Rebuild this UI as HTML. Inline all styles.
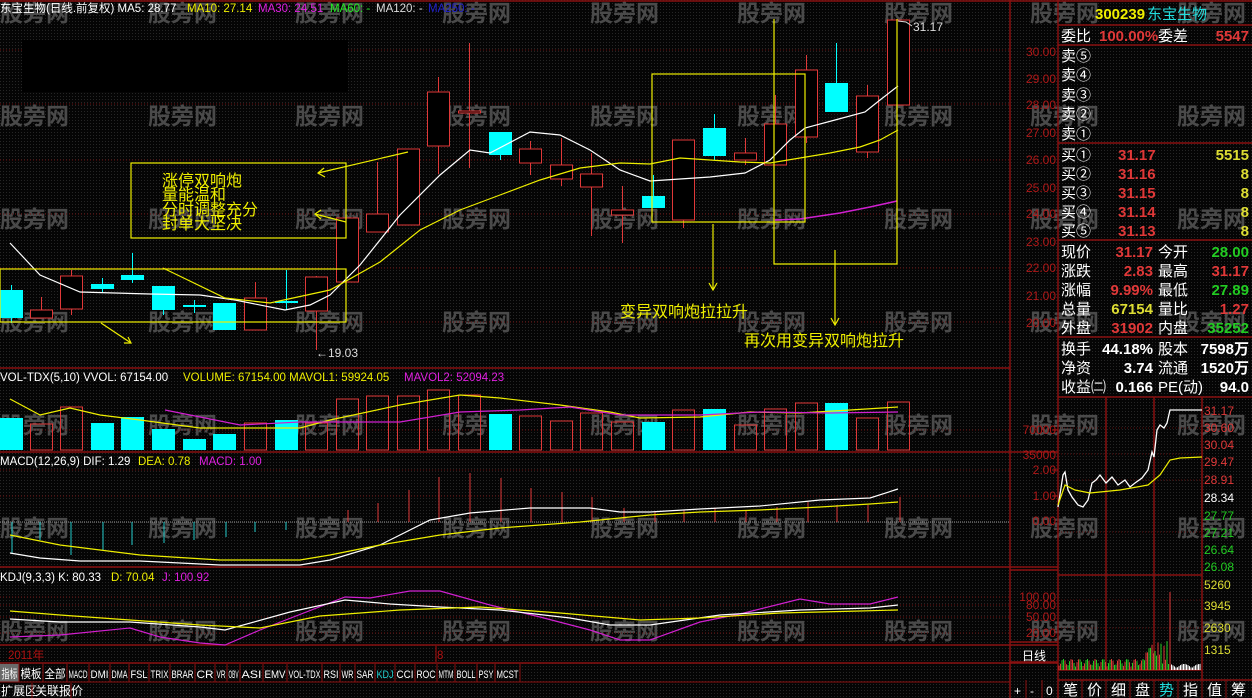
<!DOCTYPE html>
<html><head><meta charset="utf-8"><style>
html,body{margin:0;padding:0;background:#000;width:1252px;height:698px;overflow:hidden}
svg{display:block}
text{font-family:"Liberation Sans","Noto Sans CJK SC",sans-serif}
</style></head><body>
<svg id="s" width="1252" height="698" viewBox="0 0 1252 698" xmlns="http://www.w3.org/2000/svg">
<defs><pattern id="dots" width="3" height="3" patternUnits="userSpaceOnUse"><rect width="3" height="3" fill="#050505"/><rect width="1" height="1" fill="#262626"/></pattern></defs>
<rect width="1252" height="698" fill="url(#dots)"/>
<g id="wm" fill="#4a4a4a" font-size="23" font-weight="bold"></g>
<g stroke="#6a1010" stroke-dasharray="1,2" stroke-width="1">
<line x1="0" y1="50" x2="1010" y2="50"/><line x1="0" y1="104" x2="1010" y2="104"/><line x1="0" y1="160" x2="1010" y2="160"/><line x1="0" y1="214" x2="1010" y2="214"/><line x1="0" y1="268" x2="1010" y2="268"/><line x1="0" y1="322" x2="1010" y2="322"/>
<line x1="0" y1="430" x2="1010" y2="430"/>
<line x1="0" y1="470" x2="1010" y2="470"/><line x1="0" y1="496" x2="1010" y2="496"/>
<line x1="0" y1="597" x2="1010" y2="597"/><line x1="0" y1="605" x2="1010" y2="605"/><line x1="0" y1="617" x2="1010" y2="617"/><line x1="0" y1="633" x2="1010" y2="633"/>
</g>
<line x1="0" y1="522" x2="1010" y2="522" stroke="#999" stroke-dasharray="1,1"/>
<g stroke="#8a1010" stroke-width="1.5" fill="none">
<line x1="0" y1="1" x2="1252" y2="1"/>
<line x1="0" y1="368" x2="1010" y2="368"/><line x1="0" y1="452" x2="1058" y2="452"/><line x1="0" y1="567" x2="1058" y2="567"/><line x1="0" y1="645" x2="1058" y2="645"/><line x1="0" y1="663" x2="1058" y2="663"/>
<line x1="1010" y1="0" x2="1010" y2="698"/><line x1="1058" y1="0" x2="1058" y2="698"/>
<line x1="1058" y1="25" x2="1252" y2="25"/><line x1="1058" y1="45" x2="1252" y2="45"/><line x1="1058" y1="143" x2="1252" y2="143"/><line x1="1058" y1="240" x2="1252" y2="240"/><line x1="1058" y1="337" x2="1252" y2="337"/><line x1="1058" y1="397" x2="1252" y2="397"/>
<line x1="1202" y1="397" x2="1202" y2="680"/><line x1="1058" y1="575" x2="1202" y2="575"/><line x1="1058" y1="670" x2="1202" y2="670"/>
<line x1="1106" y1="397" x2="1106" y2="670"/><line x1="1154" y1="397" x2="1154" y2="670"/>
<line x1="1010" y1="570" x2="1058" y2="570"/><line x1="1010" y1="642" x2="1058" y2="642"/><line x1="1010" y1="662" x2="1058" y2="662"/>
<line x1="1058" y1="680" x2="1252" y2="680"/>
</g>
<g stroke="#5a0a0a" stroke-dasharray="1,2"><line x1="1058" y1="428" x2="1202" y2="428"/><line x1="1058" y1="454" x2="1202" y2="454"/><line x1="1058" y1="480" x2="1202" y2="480"/><line x1="1058" y1="532" x2="1202" y2="532"/><line x1="1058" y1="600" x2="1202" y2="600"/><line x1="1058" y1="628" x2="1202" y2="628"/></g>

<rect x="22" y="40" width="326" height="52" fill="#000"/>
<g id="candles"></g>
<g id="vols"></g>
<g id="macdh"></g>

<g fill="none" stroke-width="1.2">
<polyline stroke="#fff" points="10,243 40,275 80,292 150,294 200,295 235,300 285,310 310,305 330,295 360,265 400,215 440,175 470,150 490,153 530,132 560,135 590,150 620,170 650,181 680,179 710,177 745,173 770,160 790,140 805,128 835,120 865,112 880,100 898,86"/>
<polyline stroke="#ee0" points="163,268 225,298 270,303 330,290 380,262 420,230 460,210 500,195 540,180 580,168 620,163 650,164 680,158 710,160 740,162 770,163 800,158 830,153 860,147 880,140 898,130"/>
<polyline stroke="#d020d0" stroke-width="1.6" points="775,220 800,219 840,213 870,207 897,201"/>
<polyline stroke="#ee0" points="10,399 40,415 70,408 100,415 140,420 200,428 235,428 300,428 330,420 400,405 460,395 500,398 560,405 610,412 640,418 700,417 750,412 800,413 850,410 898,407"/>
<polyline stroke="#d020d0" points="165,410 240,425 300,422 400,422 460,412 520,410 570,407 620,415 700,415 760,412 830,413 898,412"/>
<polyline stroke="#fff" points="10,553 40,558 80,561 140,561 220,565 300,565 330,560 380,545 430,520 470,513 530,508 590,508 620,512 650,512 700,509 760,506 820,500 870,498 898,489"/>
<polyline stroke="#ee0" points="10,535 60,545 140,555 220,560 300,560 330,555 380,545 440,535 500,528 580,522 650,515 700,512 760,510 820,507 870,504 898,502"/>
<polyline stroke="#d020d0" points="10,637 60,635 130,628 160,637 200,643 225,645 260,630 345,597 370,598 410,591 440,591 490,605 540,617 590,630 620,640 650,640 700,622 740,614 800,599 830,604 870,604 898,597"/>
<polyline stroke="#fff" points="10,619 60,622 130,622 200,627 225,630 290,612 345,600 390,604 440,607 500,610 570,618 610,625 650,625 720,615 800,610 870,608 898,605"/>
<polyline stroke="#ee0" points="10,611 60,615 130,620 200,625 260,628 320,616 400,610 480,607 560,613 640,620 700,618 780,613 860,611 898,610"/>
</g>

<g stroke="#ee0" fill="none" stroke-width="1.2">
<rect x="131" y="163" width="215" height="75"/>
<rect x="0" y="269" width="346" height="53"/>
<rect x="652" y="74" width="153" height="148"/>
<polyline points="774,19 774,264 897,264 897,19"/>
<line x1="408" y1="152" x2="318" y2="173"/><polyline points="324,168 318,173 325,177"/>
<line x1="346" y1="222" x2="315" y2="214"/><polyline points="321,210 315,214 321,219"/>
<line x1="101" y1="323" x2="131" y2="343"/><polyline points="124,343 131,343 128,337"/>
<line x1="713" y1="224" x2="713" y2="290"/><polyline points="709,283 713,290 717,283"/>
<line x1="835" y1="250" x2="835" y2="325"/><polyline points="831,318 835,325 839,318"/>
</g>
<g fill="#ee0" font-size="16">
<text x="162" y="186">涨停双响炮</text>
<text x="162" y="200">量能温和</text>
<text x="162" y="215">分时调整充分</text>
<text x="162" y="229">封单大坚决</text>
<text x="620" y="317">变异双响炮拉拉升</text>
<text x="744" y="346">再次用变异双响炮拉升</text>
</g>
<text x="316" y="357" fill="#ddd" font-size="12">←19.03</text>
<text x="913" y="31" fill="#ddd" font-size="12">31.17</text>
<polyline points="898,21 906,22 912,26" stroke="#ddd" fill="none"/>

<g font-size="11.5">
<text x="0" y="12" fill="#fff">东宝生物(日线.前复权) MA5: 28.77</text>
<text x="187" y="12" fill="#ee0">MA10: 27.14</text>
<text x="258" y="12" fill="#e020e0">MA30: 24.51</text>
<text x="330" y="12" fill="#2e2">MA60: -</text>
<text x="376" y="12" fill="#ddd">MA120: -</text>
<text x="428" y="12" fill="#22c">MA250: -</text>
<text x="0" y="381" fill="#fff">VOL-TDX(5,10) VVOL: 67154.00</text>
<text x="183" y="381" fill="#ee0">VOLUME: 67154.00  MAVOL1: 59924.05</text>
<text x="404" y="381" fill="#e020e0">MAVOL2: 52094.23</text>
<text x="0" y="465" fill="#fff">MACD(12,26,9) DIF: 1.29</text>
<text x="138" y="465" fill="#ee0">DEA: 0.78</text>
<text x="199" y="465" fill="#e020e0">MACD: 1.00</text>
<text x="0" y="581" fill="#fff">KDJ(9,3,3) K: 80.33</text>
<text x="111" y="581" fill="#ee0">D: 70.04</text>
<text x="162" y="581" fill="#e020e0">J: 100.92</text>
<text x="8" y="659" fill="#b01010">2011年</text>
<text x="437" y="659" fill="#b01010">8</text>
</g>
<line x1="436" y1="646" x2="436" y2="662" stroke="#b01010"/>

<g font-size="12" fill="#b01818" text-anchor="end">
<text x="1056" y="56">30.00</text><text x="1056" y="83">29.00</text><text x="1056" y="109">28.00</text><text x="1056" y="137">27.00</text><text x="1056" y="164">26.00</text><text x="1056" y="192">25.00</text><text x="1056" y="218">24.00</text><text x="1056" y="246">23.00</text><text x="1056" y="272">22.00</text><text x="1056" y="300">21.00</text><text x="1056" y="327">20.00</text>
<text x="1056" y="434">70000</text><text x="1056" y="459">35000</text>
<text x="1056" y="474">2.00</text><text x="1056" y="500">1.00</text><text x="1056" y="525">0.00</text>
<text x="1056" y="601">100.00</text><text x="1056" y="609">80.00</text><text x="1056" y="621">50.00</text><text x="1056" y="637">20.00</text>
</g>
<g stroke="#b01818"><line x1="1052" y1="430" x2="1058" y2="430"/><line x1="1052" y1="470" x2="1058" y2="470"/><line x1="1052" y1="496" x2="1058" y2="496"/></g>
<text x="1022" y="660" fill="#fff" font-size="12">日线</text>
<g fill="#fff" font-size="12"><text x="1014" y="695">+</text><text x="1030" y="695">-</text><text x="1046" y="695">0</text></g>
<g stroke="#8a1010"><line x1="1026" y1="680" x2="1026" y2="698"/><line x1="1042" y1="680" x2="1042" y2="698"/></g>

<g font-size="15" font-weight="bold">
<text x="1095" y="19" fill="#ee0">300239</text><text x="1147" y="19" fill="#2dd" font-weight="normal">东宝生物</text>
<text x="1061" y="41" fill="#fff" font-weight="normal">委比</text><text x="1099" y="41" fill="#e03838">100.00%</text><text x="1158" y="41" fill="#fff" font-weight="normal">委差</text><text x="1249" y="41" fill="#e03838" text-anchor="end">5547</text>
<g fill="#fff" font-weight="normal"><text x="1061" y="61">卖⑤</text><text x="1061" y="80">卖④</text><text x="1061" y="100">卖③</text><text x="1061" y="119">卖②</text><text x="1061" y="139">卖①</text>
<text x="1061" y="160">买①</text><text x="1061" y="179">买②</text><text x="1061" y="198">买③</text><text x="1061" y="217">买④</text><text x="1061" y="236">买⑤</text></g>
<g fill="#e03838"><text x="1118" y="160">31.17</text><text x="1118" y="179">31.16</text><text x="1118" y="198">31.15</text><text x="1118" y="217">31.14</text><text x="1118" y="236">31.13</text></g>
<g fill="#dd3" text-anchor="end"><text x="1249" y="160">5515</text><text x="1249" y="179">8</text><text x="1249" y="198">8</text><text x="1249" y="217">8</text><text x="1249" y="236">8</text></g>
<g fill="#fff" font-weight="normal"><text x="1061" y="257">现价</text><text x="1061" y="276">涨跌</text><text x="1061" y="295">涨幅</text><text x="1061" y="314">总量</text><text x="1061" y="333">外盘</text>
<text x="1158" y="257">今开</text><text x="1158" y="276">最高</text><text x="1158" y="295">最低</text><text x="1158" y="314">量比</text><text x="1158" y="333">内盘</text>
<text x="1061" y="354">换手</text><text x="1061" y="373">净资</text><text x="1061" y="392">收益㈡</text><text x="1158" y="354">股本</text><text x="1158" y="373">流通</text><text x="1158" y="392">PE(动)</text></g>
<g text-anchor="end"><text x="1153" y="257" fill="#e03838">31.17</text><text x="1153" y="276" fill="#e03838">2.83</text><text x="1153" y="295" fill="#e03838">9.99%</text><text x="1153" y="314" fill="#dd3">67154</text><text x="1153" y="333" fill="#e03838">31902</text>
<text x="1249" y="257" fill="#2c2">28.00</text><text x="1249" y="276" fill="#e03838">31.17</text><text x="1249" y="295" fill="#2c2">27.89</text><text x="1249" y="314" fill="#e03838">1.27</text><text x="1249" y="333" fill="#2c2">35252</text>
<text x="1153" y="354" fill="#fff">44.18%</text><text x="1153" y="373" fill="#fff">3.74</text><text x="1153" y="392" fill="#fff">0.166</text>
<text x="1249" y="354" fill="#fff">7598万</text><text x="1249" y="373" fill="#fff">1520万</text><text x="1249" y="392" fill="#fff">94.0</text></g>
</g>
<g font-size="12" text-anchor="start">
<text x="1204" y="415" fill="#e03838">31.17</text><text x="1204" y="432" fill="#e03838">30.60</text><text x="1204" y="449" fill="#e03838">30.04</text><text x="1204" y="466" fill="#e03838">29.47</text><text x="1204" y="484" fill="#e03838">28.91</text><text x="1204" y="502" fill="#fff">28.34</text><text x="1204" y="520" fill="#2c2">27.77</text><text x="1204" y="537" fill="#2c2">27.21</text><text x="1204" y="554" fill="#2c2">26.64</text><text x="1204" y="571" fill="#2c2">26.08</text>
<text x="1204" y="589" fill="#dd3">5260</text><text x="1204" y="610" fill="#dd3">3945</text><text x="1204" y="632" fill="#dd3">2630</text><text x="1204" y="654" fill="#dd3">1315</text>
</g>
<polyline fill="none" stroke="#fff" stroke-width="1.3" points="1058,507 1063,475 1065,472 1068,490 1072,497 1078,505 1083,507 1088,500 1092,483 1096,480 1100,475 1106,483 1112,477 1118,485 1125,480 1130,487 1135,483 1142,478 1148,470 1152,452 1154,457 1157,430 1160,425 1164,428 1167,423 1170,410 1202,410"/>
<polyline fill="none" stroke="#ee0" stroke-width="1.2" points="1058,505 1065,485 1075,490 1090,493 1120,490 1148,485 1160,475 1170,460 1180,458 1202,457"/>
<g id="ivol"></g>
<g font-size="15" fill="#fff">
<text x="1063" y="695">笔</text><text x="1087" y="695">价</text><text x="1111" y="695">细</text><text x="1135" y="695">盘</text><text x="1159" y="695" fill="#2dd">势</text><text x="1183" y="695">指</text><text x="1207" y="695">值</text><text x="1231" y="695">筹</text>
</g>
<g stroke="#8a1010"><line x1="1082" y1="680" x2="1082" y2="698"/><line x1="1106" y1="680" x2="1106" y2="698"/><line x1="1130" y1="680" x2="1130" y2="698"/><line x1="1154" y1="680" x2="1154" y2="698"/><line x1="1178" y1="680" x2="1178" y2="698"/><line x1="1202" y1="680" x2="1202" y2="698"/><line x1="1226" y1="680" x2="1226" y2="698"/></g>
<rect x="0" y="664" width="19" height="18" fill="#6a6a6a"/>
<g id="tb" font-size="11" fill="#fff"></g>
<line x1="0" y1="682" x2="1010" y2="682" stroke="#8a1010"/>
<g font-size="12" fill="#fff"><text x="1" y="695">扩展区</text><text x="35" y="695">关联报价</text></g>
<g stroke="#8a1010"><line x1="32" y1="683" x2="32" y2="698"/><line x1="71" y1="683" x2="71" y2="698"/></g>
</svg>
<script>
var NS="http://www.w3.org/2000/svg";
function el(p,t,a,txt){var e=document.createElementNS(NS,t);for(var k in a)e.setAttribute(k,a[k]);if(txt)e.textContent=txt;p.appendChild(e);return e;}
var wm=document.getElementById("wm");
[12,115,218,321,424,527,630].forEach(function(y){[0,148,295,442,590,737,884,1030,1177].forEach(function(x){el(wm,"text",{x:x,y:y+9},"股旁网");});});
var C=[[0,290,318,285,323,'c'],[30,310,318,297,318,'r'],[60,276,309,270,315,'r'],[91,284,289,278,293,'c'],[121,275,280,253,283,'c'],[152,286,310,286,315,'c'],[183,305,307,300,313,'c'],[213,303,330,303,330,'c'],[244,298,330,282,330,'r'],[275,301,303,270,310,'c'],[305,277,311,276,350,'r'],[336,218,282,218,282,'r'],[366,214,232,162,232,'r'],[397,149,225,149,225,'r'],[427,92,146,77,174,'r'],[458,111,113,43,168,'r'],[489,132,155,132,160,'c'],[519,149,163,141,175,'r'],[550,165,179,138,186,'r'],[580,174,187,153,236,'r'],[611,210,215,186,243,'r'],[642,196,208,175,208,'c'],[672,140,220,140,228,'r'],[703,128,156,114,160,'c'],[734,153,160,138,165,'r'],[764,124,165,95,165,'r'],[795,70,137,55,143,'r'],[825,83,112,43,112,'c'],[856,96,152,85,158,'r'],[887,20,105,20,105,'r']];
var V=[418,424,407,423,417,429,439,434,423,420,423,399,396,396,390,395,414,416,421,413,422,422,410,409,425,409,403,403,418,402];
var g=document.getElementById("candles"),gv=document.getElementById("vols");
C.forEach(function(c,i){var cx=c[0]+11.5,red=c[5]=='r',col=red?'#e03838':'#00ffff';
el(g,"line",{x1:cx,y1:c[3],x2:cx,y2:c[4],stroke:col});
if(red)el(g,"rect",{x:c[0]+.5,y:c[1],width:22,height:Math.max(c[2]-c[1],2),fill:'#000',stroke:col});
else el(g,"rect",{x:c[0],y:c[1],width:23,height:Math.max(c[2]-c[1],2),fill:col});
if(red)el(gv,"rect",{x:c[0]+.5,y:V[i],width:22,height:450-V[i],fill:'none',stroke:col});
else el(gv,"rect",{x:c[0],y:V[i],width:23,height:450-V[i],fill:col});});
var M=[[12,553],[40,540],[71,555],[103,550],[132,545],[164,543],[194,540],[226,537],[255,532],[286,530],[348,510],[378,503],[409,490],[439,477],[470,473],[501,478],[531,488],[562,492],[592,497],[624,508],[655,512],[684,510],[715,508],[746,510],[777,507],[808,502],[837,505],[868,505],[900,497]];
var gm=document.getElementById("macdh");
M.forEach(function(m){el(gm,"line",{x1:m[0],y1:522,x2:m[0],y2:m[1],stroke:m[1]>522?'#2cc':'#e03838'});});
var iv=document.getElementById("ivol");
for(var x=1059;x<1201;x+=1.5){var h=x<1168?3+Math.abs(Math.sin(x*1.7)*8)+(x>1145?Math.abs(Math.sin(x)*18):0):2+Math.abs(Math.sin(x*2.3)*4);
var col=x>1170?'#fff':(Math.sin(x*3.1)>0?'#e03838':'#2c2');if(Math.abs(x-1170)<1)h=78;el(iv,"line",{x1:x,y1:670,x2:x,y2:670-h,stroke:col,"stroke-width":1});}
var tb=document.getElementById("tb");
var L=["指标","模板","全部","MACD","DMI","DMA","FSL","TRIX","BRAR","CR","VR","OBV","ASI","EMV","VOL-TDX","RSI","WR","SAR","KDJ","CCI","ROC","MTM","BOLL","PSY","MCST"];
var B=[0,19,43,67,89,110,129,149,170,195,215,227,240,263,287,322,340,355,375,395,415,437,455,477,495,520];
L.forEach(function(t,i){var w=B[i+1]-B[i]-3;var e=el(tb,"text",{x:B[i]+1.5,y:678,textLength:w,lengthAdjust:"spacingAndGlyphs",fill:t=="KDJ"?"#2cc":"#fff","font-family":"Liberation Mono,Noto Sans CJK SC,monospace","font-size":i<3?12:11},t);
el(tb,"line",{x1:B[i+1],y1:664,x2:B[i+1],y2:682,stroke:"#8a1010"});});
</script>
</body></html>
